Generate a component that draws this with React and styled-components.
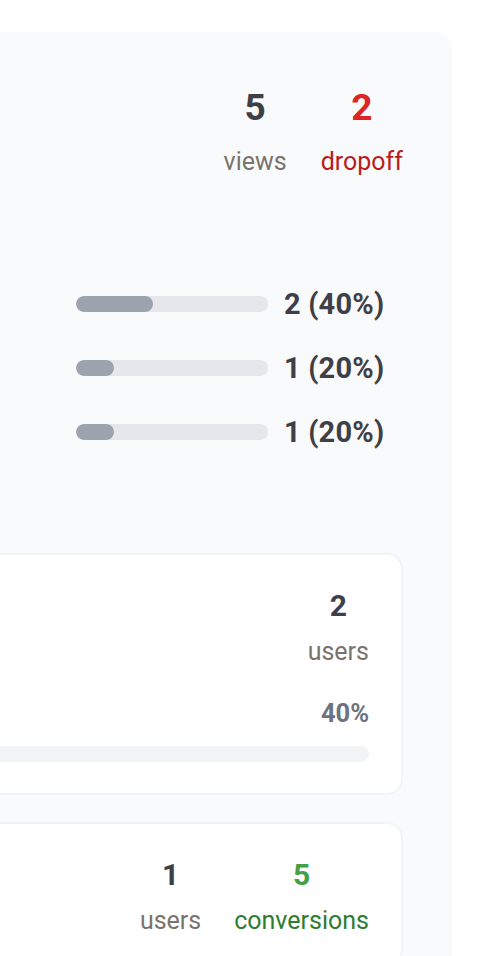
import React from 'react';
import styled, { createGlobalStyle } from 'styled-components';

const GlobalStyle = createGlobalStyle`
  html, body {
    margin: 0;
    padding: 0;
    background: #ffffff;
    font-family: Roboto, "Liberation Sans", Arial, sans-serif;
    overflow-x: hidden;
  }
`;

const funnel = {
  views: 5,
  dropoff: 2,
  answers: [
    { count: 2, pct: 40 },
    { count: 1, pct: 20 },
    { count: 1, pct: 20 },
  ],
};

const Panel = styled.section`
  margin: 32px 36px 0 -100px;
  padding: 57px 49px 32px 100px;
  background: #f9fafb;
  border-top-right-radius: 16px;
`;

const StatRow = styled.div`
  display: flex;
  justify-content: flex-end;
  gap: ${(p) => p.$gap || 34}px;
`;

const Stat = styled.div`
  display: flex;
  flex-direction: column;
  align-items: center;
  gap: ${(p) => p.$gap || 23}px;
`;

const Value = styled.div`
  font-size: ${(p) => p.$size || 37}px;
  line-height: 1;
  font-weight: 700;
  color: ${(p) => p.$color || '#3f4047'};
`;

const Label = styled.div`
  font-size: 25px;
  line-height: 1;
  font-weight: 400;
  color: ${(p) => p.$color || '#7a736d'};
`;

const BarList = styled.div`
  display: flex;
  flex-direction: column;
  gap: 32px;
  margin: 114px 0 0 76px;
`;

const BarRow = styled.div`
  display: flex;
  align-items: center;
  gap: 16px;
  height: 32px;
`;

const Track = styled.div`
  width: ${(p) => (p.$full ? 'auto' : '192px')};
  height: 16px;
  border-radius: 8px;
  background: ${(p) => (p.$full ? '#f3f4f6' : '#e5e7eb')};
  overflow: hidden;
`;

const Fill = styled.div`
  height: 100%;
  border-radius: 8px;
  background: #9ca3af;
`;

const BarLabel = styled.span`
  font-size: 29px;
  line-height: 32px;
  font-weight: 700;
  letter-spacing: 0.2px;
  color: #3f4047;
  white-space: nowrap;
`;

const Card = styled.div`
  margin: ${(p) => p.$top}px 0 0 -60px;
  padding: 36px 32px 31px;
  background: #ffffff;
  border: 2px solid #f2f3f5;
  border-radius: 16px;
`;

const Percent = styled.div`
  margin-top: 37px;
  text-align: right;
  font-size: 25.5px;
  line-height: 1;
  font-weight: 700;
  color: #6b7280;
`;

const CardTrack = styled(Track)`
  margin-top: 19px;
`;

export default function App() {
  return (
    <>
      <GlobalStyle />
      <Panel>
        <StatRow>
          <Stat>
            <Value>{funnel.views}</Value>
            <Label>views</Label>
          </Stat>
          <Stat>
            <Value $color="#dc2626">{funnel.dropoff}</Value>
            <Label $color="#b91c1c">dropoff</Label>
          </Stat>
        </StatRow>

        <BarList>
          {funnel.answers.map((a, i) => (
            <BarRow key={i}>
              <Track>
                <Fill style={{ width: `${a.pct}%` }} />
              </Track>
              <BarLabel>
                {a.count} ({a.pct}%)
              </BarLabel>
            </BarRow>
          ))}
        </BarList>

        <Card $top={105}>
          <StatRow $gap={33}>
            <Stat $gap={18}>
              <Value $size={30}>2</Value>
              <Label>users</Label>
            </Stat>
          </StatRow>
          <Percent>40%</Percent>
          <CardTrack $full />
        </Card>

        <Card $top={27}>
          <StatRow $gap={33}>
            <Stat $gap={18}>
              <Value $size={30}>1</Value>
              <Label>users</Label>
            </Stat>
            <Stat $gap={18}>
              <Value $size={30} $color="#43a047">
                5
              </Value>
              <Label $color="#2e7d32">conversions</Label>
            </Stat>
          </StatRow>
        </Card>
      </Panel>
    </>
  );
}
